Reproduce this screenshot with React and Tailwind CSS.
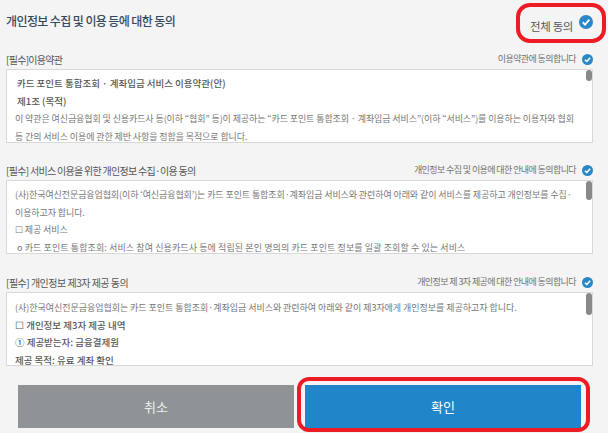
const font = { fontFamily: '"Noto Sans CJK KR", "Noto Sans", sans-serif' };

function Check({ size = 11 }) {
  return (
    <svg width={size} height={size} viewBox="0 0 12 12" className="shrink-0">
      <circle cx="6" cy="6" r="6" fill="#2a87c8" />
      <path d="M3.2 6.2 L5.2 8.2 L8.9 4" fill="none" stroke="#fff" strokeWidth="1.6" />
    </svg>
  );
}

function Section({ label, labelClass, agree, thumb, children, className }) {
  return (
    <section className={className}>
      <div className="flex h-[20px] items-center justify-between pr-[15px]">
        <span className={`text-[10px] text-[#555] ${labelClass}`}>{label}</span>
        <span className="flex items-center gap-[6px] text-[9px] tracking-[-0.6px] text-[#707070]">
          {agree}
          <Check />
        </span>
      </div>
      <div className="relative h-[74px] w-[587px] overflow-hidden border border-[#d8d8d8] bg-white text-[9px] leading-[17.7px] tracking-[-0.1px] text-[#777]">
        <div className={`absolute right-0 top-0 w-[6px] rounded-[3px] bg-[#888] ${thumb}`} />
        {children}
      </div>
    </section>
  );
}

export default function App() {
  return (
    <div className="relative h-[433px] w-[608px] overflow-hidden bg-[#f4f4f4] pl-[6px]" style={font}>
      <header className="flex h-[49px] items-start justify-between pr-[15px] pt-[11px]">
        <h1 className="text-[12px] font-medium leading-[20px] tracking-[-0.6px] text-[#34495e]">개인정보 수집 및 이용 등에 대한 동의</h1>
        <div className="flex items-start gap-[6px] pt-[4px] text-[11.5px] leading-[18px] tracking-[-0.4px] text-[#555]">
          <span className="mt-[2px]">전체 동의</span>
          <Check size={14} />
        </div>
      </header>

      <Section labelClass="tracking-[-0.7px]" label="[필수]이용약관" agree="이용약관에 동의합니다" thumb="h-[11px]">
        <div className="pl-[10px] pt-[5px] text-[9.5px] font-medium tracking-normal text-[#555]">카드 포인트 통합조회 · 계좌입금 서비스 이용약관(안)</div>
        <div className="pl-[10px] text-[9.5px] font-medium tracking-normal text-[#555]">제1조 (목적)</div>
        <div className="whitespace-nowrap pl-[8px]">이 약관은 여신금융협회 및 신용카드사 등(이하 “협회” 등)이 제공하는 “카드 포인트 통합조회 · 계좌입금 서비스”(이하 “서비스”)를 이용하는 이용자와 협회</div>
        <div className="pl-[8px]">등 간의 서비스 이용에 관한 제반 사항을 정함을 목적으로 합니다.</div>
      </Section>

      <Section className="mt-[17px]" labelClass="tracking-[-0.7px]" label="[필수] 서비스 이용을 위한 개인정보 수집·이용 동의" agree="개인정보 수집 및 이용에 대한 안내에 동의합니다" thumb="h-[19px]">
        <div className="whitespace-nowrap pl-[8px] pt-[5px]">(사)한국여신전문금융업협회(이하 ‘여신금융협회’)는 카드 포인트 통합조회·계좌입금 서비스와 관련하여 아래와 같이 서비스를 제공하고 개인정보를 수집·</div>
        <div className="pl-[8px]">이용하고자 합니다.</div>
        <div className="pl-[8px]">☐ 제공 서비스</div>
        <div className="whitespace-nowrap pl-[10px] tracking-[0.1px]">o 카드 포인트 통합조회: 서비스 참여 신용카드사 등에 적립된 본인 명의의 카드 포인트 정보를 일괄 조회할 수 있는 서비스</div>
      </Section>

      <Section className="mt-[18px]" labelClass="tracking-[-0.5px]" label="[필수] 개인정보 제3자 제공 동의" agree="개인정보 제 3자 제공에 대한 안내에 동의합니다" thumb="h-[22px]">
        <div className="whitespace-nowrap pl-[8px] pt-[6px] tracking-[-0.04px]">(사)한국여신전문금융업협회는 카드 포인트 통합조회·계좌입금 서비스와 관련하여 아래와 같이 제3자에게 개인정보를 제공하고자 합니다.</div>
        <div className="pl-[8px] text-[9.5px] font-medium tracking-normal text-[#555]">☐ 개인정보 제3자 제공 내역</div>
        <div className="pl-[8px] text-[9.5px] font-medium tracking-normal text-[#555]">① 제공받는자: 금융결제원</div>
        <div className="pl-[8px] text-[9.5px] font-medium tracking-normal text-[#555]">제공 목적: 유료 계좌 확인</div>
      </Section>

      <div className="mt-[19px] flex gap-[11px] pl-[12px]">
        <button className="h-[43px] w-[276px] bg-[#8f9396] text-[13px] text-[#f0f0f0]">취소</button>
        <button className="h-[43px] w-[276px] bg-[#2185c9] text-[13px] text-white">확인</button>
      </div>

      <div className="absolute left-[516px] top-[3px] h-[40px] w-[90px] rounded-[14px] border-[4.5px] border-[#ed1c24]" />
      <div className="absolute left-[297px] top-[377px] h-[55px] w-[293px] rounded-[12px] border-[4px] border-[#ed1c24]" />
    </div>
  );
}
